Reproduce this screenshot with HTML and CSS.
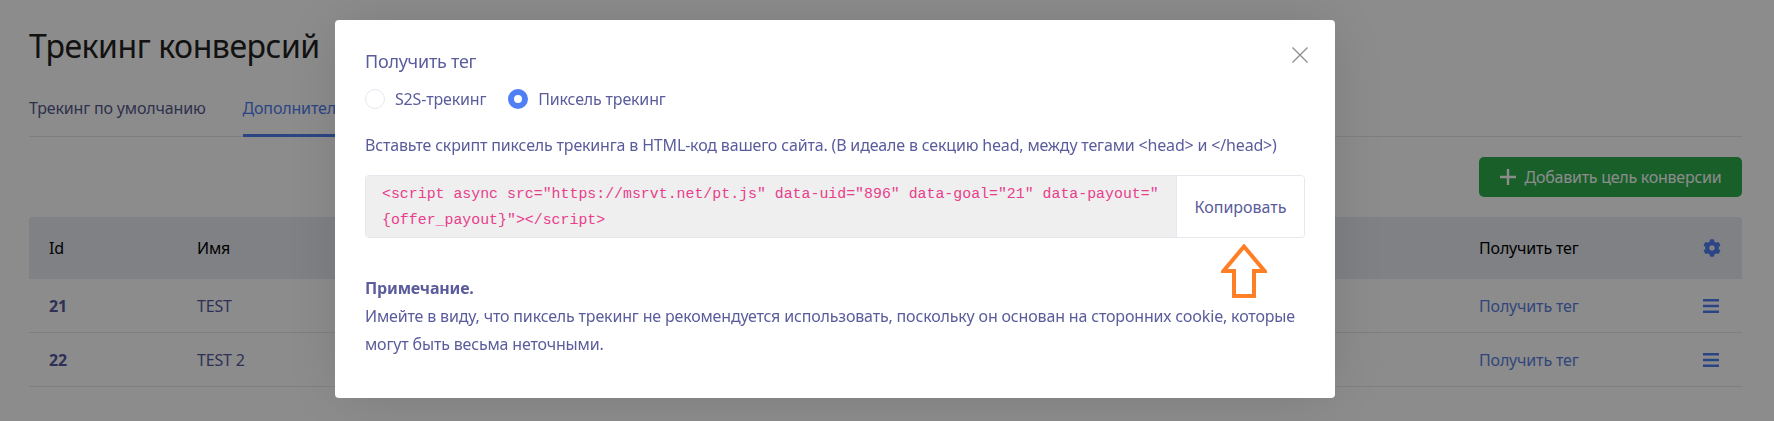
FILE: index.html
```html
<!DOCTYPE html>
<html lang="ru">
<head>
<meta charset="utf-8">
<title>Трекинг конверсий</title>
<link rel="stylesheet" href="styles.css">
</head>
<body>
<main class="page">
  <h1 class="page-title">Трекинг конверсий</h1>
  <nav class="tabs">
    <a class="tab">Трекинг по умолчанию</a>
    <a class="tab tab-active">Дополнительные</a>
  </nav>
  <div class="toolbar">
    <button class="btn-add"><svg class="icon-plus" viewBox="0 0 16 16"><path d="M8 0v16M0 8h16"/></svg>Добавить цель конверсии</button>
  </div>
  <div class="table">
    <div class="row row-head">
      <span>Id</span><span>Имя</span><span></span><span>Получить тег</span>
      <svg class="icon-gear" viewBox="0 0 512 512"><path d="M487.4 315.7l-42.6-24.6c4.3-23.2 4.3-47 0-70.2l42.6-24.6c4.9-2.8 7.1-8.6 5.5-14-11.1-35.6-30-67.8-54.7-94.6-3.8-4.1-10-5.1-14.8-2.3L380.8 110c-17.9-15.4-38.5-27.3-60.8-35.1V25.8c0-5.6-3.9-10.5-9.4-11.7-36.7-8.2-74.3-7.8-109.2 0-5.5 1.2-9.4 6.1-9.4 11.7V75c-22.2 7.9-42.8 19.8-60.8 35.1L88.7 85.5c-4.9-2.8-11-1.9-14.8 2.3-24.7 26.7-43.6 58.9-54.7 94.6-1.7 5.4.6 11.2 5.5 14L67.3 221c-4.3 23.2-4.3 47 0 70.2l-42.6 24.6c-4.9 2.8-7.1 8.6-5.5 14 11.1 35.6 30 67.8 54.7 94.6 3.8 4.1 10 5.1 14.8 2.3l42.6-24.6c17.9 15.4 38.5 27.3 60.8 35.1v49.2c0 5.6 3.9 10.5 9.4 11.7 36.7 8.2 74.3 7.8 109.2 0 5.5-1.2 9.4-6.1 9.4-11.7v-49.2c22.2-7.9 42.8-19.8 60.8-35.1l42.6 24.6c4.9 2.8 11 1.9 14.8-2.3 24.7-26.7 43.6-58.9 54.7-94.6 1.5-5.5-.7-11.3-5.6-14.1zM256 336c-44.1 0-80-35.9-80-80s35.9-80 80-80 80 35.9 80 80-35.9 80-80 80z"/></svg>
    </div>
    <div class="row">
      <b class="cell-id">21</b><span class="cell-name">TEST</span><span></span><a class="cell-link">Получить тег</a>
      <svg class="icon-menu" viewBox="0 0 16 14"><path d="M0 1.2h16M0 7h16M0 12.8h16"/></svg>
    </div>
    <div class="row">
      <b class="cell-id">22</b><span class="cell-name">TEST 2</span><span></span><a class="cell-link">Получить тег</a>
      <svg class="icon-menu" viewBox="0 0 16 14"><path d="M0 1.2h16M0 7h16M0 12.8h16"/></svg>
    </div>
  </div>
</main>

<div class="overlay">
  <section class="modal">
    <svg class="modal-close" viewBox="0 0 16 16"><path d="M0.5 0.5l15 15M15.5 0.5l-15 15"/></svg>
    <h2 class="modal-title">Получить тег</h2>
    <div class="radios">
      <label class="radio"><span class="radio-dot"></span>S2S-трекинг</label>
      <label class="radio"><span class="radio-dot radio-dot-on"></span>Пиксель трекинг</label>
    </div>
    <p class="hint">Вставьте скрипт пиксель трекинга в HTML-код вашего сайта. (В идеале в секцию head, между тегами &lt;head&gt; и &lt;/head&gt;)</p>
    <div class="code-group">
      <code class="code">&lt;script async src="https://msrvt.net/pt.js" data-uid="896" data-goal="21" data-payout="<br>{offer_payout}"&gt;&lt;/script&gt;</code>
      <button class="btn-copy">Копировать</button>
    </div>
    <svg class="arrow" viewBox="0 0 46 54"><path d="M23 2.5L43.5 27H33V52H13V27H2.5Z"/></svg>
    <p class="note"><b class="note-head">Примечание.</b><br>Имейте в виду, что пиксель трекинг не рекомендуется использовать, поскольку он основан на сторонних cookie, которые могут быть весьма неточными.</p>
  </section>
</div>
</body>
</html>
```

FILE: styles.css
```css
* { box-sizing: border-box; }
html, body { margin: 0; height: 421px; overflow: hidden; background: #fff; }
body { font-family: "Noto Sans", sans-serif; font-size: 16px; letter-spacing: -0.17px; color: #000; }

.page { padding: 26px 32px 0 29px; }
.page-title { margin: 0; font-size: 32px; line-height: 40px; font-weight: 400; letter-spacing: -0.45px; color: #222; }

.tabs { display: flex; gap: 37px; margin-top: 20px; height: 51px; border-bottom: 1px solid #e6e8ee; }
.tab { line-height: 44px; color: #555a8c; }
.tab-active { color: #4f7df0; border-bottom: 3px solid #4f7df0; height: 51px; }

.toolbar { display: flex; justify-content: flex-end; margin-top: 20px; }
.btn-add { width: 263px; height: 40px; border: 0; border-radius: 5px; background: #2cad4e; color: #fff; font: inherit; letter-spacing: -0.25px; display: flex; align-items: center; justify-content: center; gap: 9px; }
.icon-plus { width: 16px; height: 16px; fill: none; stroke: #fff; stroke-width: 2.4; }

.table { margin-top: 20px; }
.row { display: grid; grid-template-columns: 148px 300px 1fr 224px 19px; align-items: center; height: 54px; padding: 0 20px; border-bottom: 1px solid #e6e8ee; }
.row-head { height: 62px; background: #e9ebf0; border-bottom: 0; border-radius: 4px 4px 0 0; }
.cell-id { color: #555a9c; }
.cell-name { color: #555a9c; }
.cell-link { color: #5b7fe0; }
.icon-gear { width: 18px; height: 18px; fill: #4f7df0; }
.icon-menu { width: 16px; height: 14px; fill: none; stroke: #4f7df0; stroke-width: 2.4; }

.overlay { position: fixed; inset: 0; background: rgba(0, 0, 0, .45); }
.modal { position: absolute; left: 335px; top: 20px; width: 1000px; height: 378px; padding: 30px; background: #fff; border-radius: 4px; color: #5a5c9b; box-shadow: 0 0 60px rgba(0, 0, 0, .12); }
.modal-close { position: absolute; right: 27px; top: 27px; width: 16px; height: 16px; fill: none; stroke: #8f8f8f; stroke-width: 1.4; }
.modal-title { margin: 0; font-size: 18px; line-height: 23px; font-weight: 400; letter-spacing: -0.25px; }
.radios { display: flex; gap: 22px; margin-top: 16px; }
.radio { display: flex; align-items: center; gap: 10px; line-height: 20px; }
.radio-dot { width: 20px; height: 20px; border-radius: 50%; border: 1px solid #e6e8ee; background: #fff; }
.radio-dot-on { border: 6px solid #4f7ff5; }
.hint { margin: 25px 0 0; line-height: 22px; }
.code-group { display: flex; margin-top: 19px; height: 63px; border: 1px solid #e6e8ee; border-radius: 4px; overflow: hidden; }
.code { flex: 1; padding: 5px 16px 0; background: #efefef; color: #e83e8c; font-family: "Liberation Mono", monospace; font-size: 14.88px; line-height: 26px; letter-spacing: 0; border-right: 1px solid #e6e8ee; }
.btn-copy { width: 127px; border: 0; background: #fff; color: #5a5c9b; font: inherit; }
.arrow { position: absolute; left: 886px; top: 224px; width: 46px; height: 54px; fill: #fff; stroke: #ff7f27; stroke-width: 4; }
.note { margin: 36px 0 0; line-height: 28px; }
.note-head { font-weight: 700; }
```
